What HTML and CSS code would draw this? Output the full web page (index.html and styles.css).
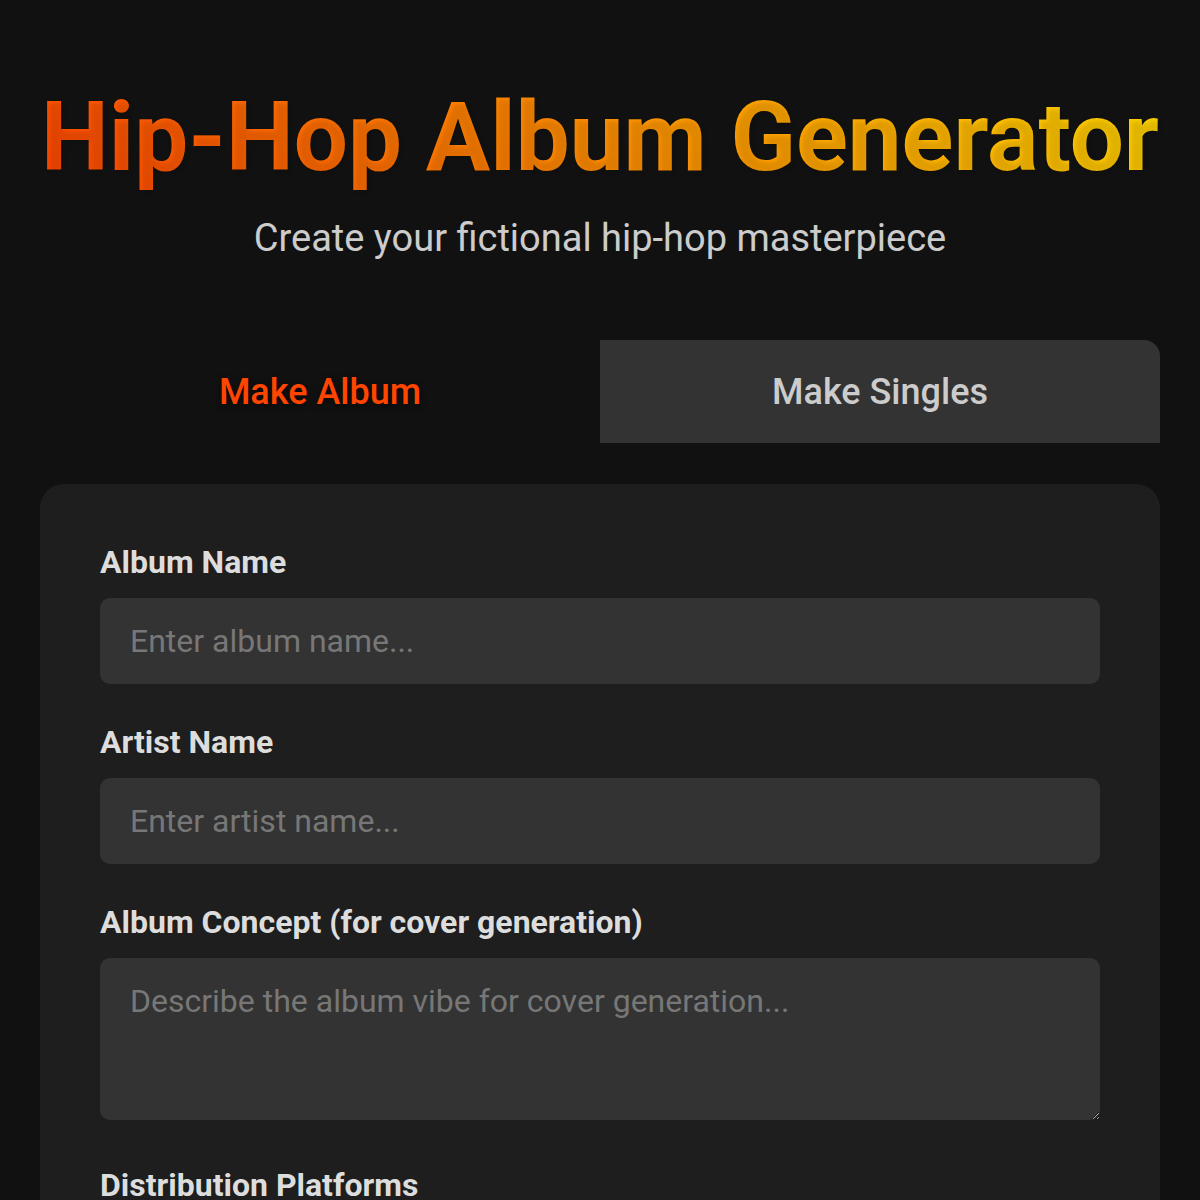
FILE: index.html
```html
<!DOCTYPE html>
<html lang="en">
<head>
  <meta charset="UTF-8" />
  <meta name="viewport" content="width=device-width, initial-scale=1.0" />
  <title>Hip-Hop Album Generator</title>
  <link rel="stylesheet" href="styles.css">
</head>
<body>
  <div class="container">
    <header class="header">
      <h1>Hip-Hop Album Generator</h1>
      <p class="subtitle">Create your fictional hip-hop masterpiece</p>
    </header>

    <div class="tabs">
      <button class="tab active">Make Album</button>
      <button class="tab">Make Singles</button>
    </div>

    <form class="card">
      <label for="albumName">Album Name</label>
      <input type="text" id="albumName" placeholder="Enter album name..." />

      <label for="artistName">Artist Name</label>
      <input type="text" id="artistName" placeholder="Enter artist name..." />

      <label for="concept">Album Concept (for cover generation)</label>
      <textarea id="concept" placeholder="Describe the album vibe for cover generation..."></textarea>

      <label>Distribution Platforms</label>
    </form>
  </div>
</body>
</html>
```

FILE: styles.css
```css
body {
  margin: 0;
  background-color: #111;
  color: #ddd;
  font-family: Roboto, "Liberation Sans", Arial, sans-serif;
}
.container {
  padding: 0 40px;
}
.header {
  text-align: center;
  padding-top: 80px;
}
h1 {
  display: inline-block;
  margin: 0;
  font-size: 96px;
  line-height: 1.2;
  font-weight: 700;
  white-space: nowrap;
  background: linear-gradient(45deg, #ff4500, #ffd700);
  -webkit-background-clip: text;
  background-clip: text;
  -webkit-text-fill-color: transparent;
  text-shadow: 2px 2px 4px rgba(0, 0, 0, 0.12);
}
.subtitle {
  margin: 20px 0 0;
  font-size: 38px;
  line-height: 46px;
  font-weight: 400;
  color: #ccc;
}
.tabs {
  display: flex;
  margin-top: 79px;
  border-radius: 16px 16px 0 0;
  overflow: hidden;
}
.tab {
  flex: 1;
  height: 103px;
  border: none;
  background: transparent;
  color: #ccc;
  font-family: inherit;
  font-size: 36px;
  font-weight: 500;
  cursor: pointer;
}
.tab:not(.active) {
  background-color: #333;
}
.tab.active {
  color: #ff4500;
  text-shadow: 0 2px 6px rgba(0, 0, 0, 0.5);
}
.card {
  margin-top: 41px;
  background-color: #1e1e1e;
  border-radius: 24px;
  padding: 60px 60px 40px;
}
label {
  display: block;
  font-size: 32px;
  font-weight: 700;
  line-height: 36px;
  margin-bottom: 18px;
  color: #ddd;
}
input, textarea {
  width: 100%;
  box-sizing: border-box;
  background-color: #333;
  border: none;
  border-radius: 10px;
  color: #ddd;
  font-family: inherit;
  font-size: 32px;
  padding: 20px 30px;
  margin-bottom: 40px;
}
input {
  height: 86px;
}
textarea {
  display: block;
  height: 162px;
  padding-top: 24px;
  margin-bottom: 47px;
  resize: vertical;
}
input::placeholder, textarea::placeholder {
  color: #777;
}
```
